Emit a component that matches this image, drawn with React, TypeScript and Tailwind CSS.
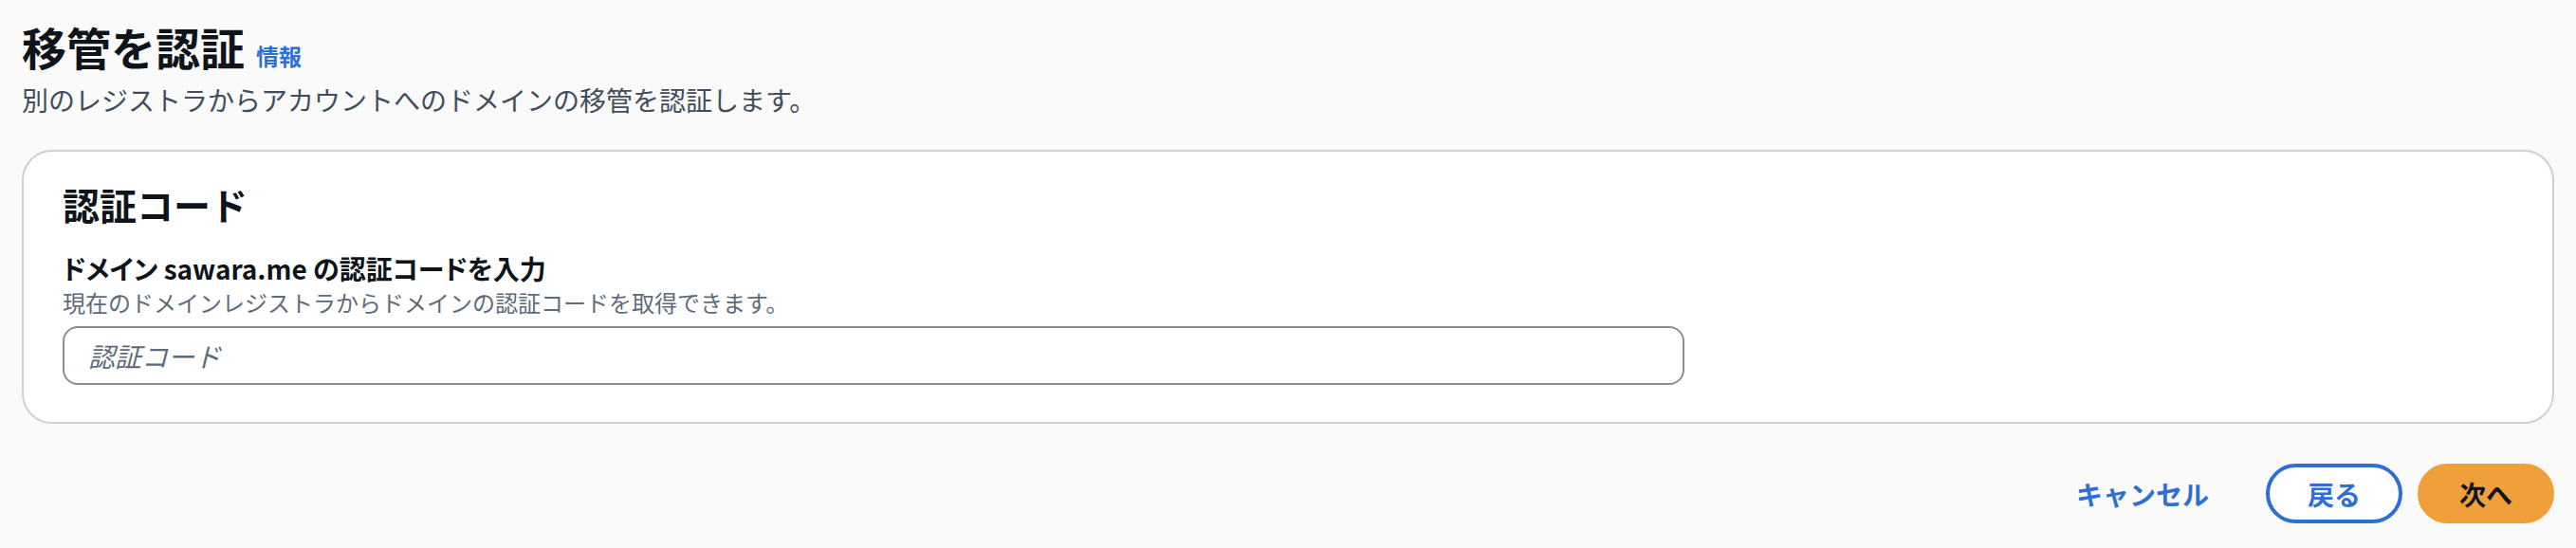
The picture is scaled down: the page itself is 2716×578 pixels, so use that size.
import React from "react";

function App() {
  const [code, setCode] = React.useState("");

  return (
    <div className="h-[578px] w-full bg-[#fafafa] px-[23px] pt-[19px] font-['Noto_Sans_CJK_JP','Noto_Sans',sans-serif] text-[#0f141a]">
      <header>
        <div className="flex items-baseline">
          <h1 className="text-[47px] leading-[60px] font-bold">移管を認証</h1>
          <a href="#" className="ml-3 text-[24px] leading-[32px] font-bold text-[#2e6fd5]">
            情報
          </a>
        </div>
        <p className="mt-[6px] text-[28px] leading-[40px] text-[#414d5c]">
          別のレジストラからアカウントへのドメインの移管を認証します。
        </p>
      </header>

      <section className="mt-[33px] rounded-[32px] border-2 border-[#cfcfd4] bg-white px-[41px] pt-[31px] pb-[39px]">
        <h2 className="text-[39px] leading-[48px] font-bold">認証コード</h2>
        <label className="mt-[24px] block">
          <span className="block text-[28px] leading-[40px] font-bold [font-feature-settings:'palt']">
            ドメイン sawara.me の認証コードを入力
          </span>
          <span className="block text-[24px] leading-[32px] text-[#5f6b7a]">
            現在のドメインレジストラからドメインの認証コードを取得できます。
          </span>
          <input
            value={code}
            onChange={(e) => setCode(e.target.value)}
            placeholder="認証コード"
            className="mt-[9px] h-[62px] w-[1710px] rounded-[16px] border-2 border-[#8c8c94] bg-white px-[25px] text-[28px] outline-none placeholder:text-[#5f6b7a] placeholder:italic"
          />
        </label>
      </section>

      <div className="mt-[42px] flex items-center justify-end gap-4">
        <button className="h-[63px] border-4 border-transparent px-10 text-[28px] font-bold text-[#2e6fd5]">
          キャンセル
        </button>
        <button className="h-[63px] rounded-full border-4 border-[#2e6fd5] bg-white px-10 text-[28px] font-bold text-[#2e6fd5]">
          戻る
        </button>
        <button className="h-[63px] rounded-full border-4 border-[#f0a03a] bg-[#f0a03a] px-10 text-[28px] font-bold text-[#0f141a]">
          次へ
        </button>
      </div>
    </div>
  );
}

export default App;
